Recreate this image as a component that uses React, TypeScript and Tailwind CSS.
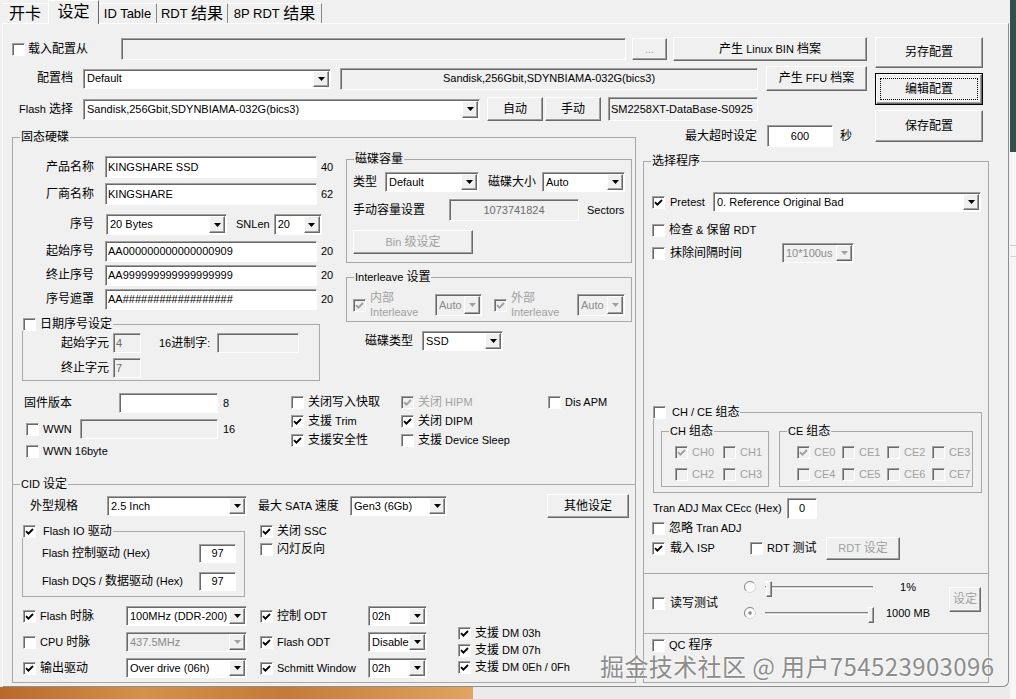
import type { ReactNode } from 'react';

const CJK = /([\u2E80-\u9FFF\u3000-\u303F\uFF00-\uFFEF]+)/;

// classic 3D frames
const sunken =
    'border border-t-[#a0a0a0] border-l-[#a0a0a0] border-b-white border-r-white shadow-[inset_1px_1px_0_#696969]';
const raised =
    'border border-t-white border-l-white border-b-[#696969] border-r-[#696969] shadow-[inset_-1px_-1px_0_#a0a0a0]';

// mixed text: CJK runs one size up from latin text
const L = ({ t, className = '' }: { t: string; className?: string }) => (
    <span className={`whitespace-nowrap ${className}`}>
        {t.split(CJK).map((p, i) => (i % 2 ? <span key={i} className="text-[12px]">{p}</span> : p))}
    </span>
);

const Check = ({ on = false, dis = false, className = '' }: { on?: boolean; dis?: boolean; className?: string }) => (
    <span className={`w-[13px] h-[13px] shrink-0 flex items-center justify-center ${sunken} ${dis ? 'bg-[#f0f0f0]' : 'bg-white'} ${className}`}>
        {on && (
            <svg width="9" height="9" viewBox="0 0 9 9">
                <path d="M1 4.2 3.4 6.6 8 2" fill="none" stroke={dis ? '#a0a0a0' : '#000'} strokeWidth="1.9" />
            </svg>
        )}
    </span>
);

const CB = ({ label, on = false, dis = false, className = '' }: { label: string; on?: boolean; dis?: boolean; className?: string }) => (
    <div className={`flex items-center ${className}`}>
        <Check on={on} dis={dis} />
        <L t={label} className={`ml-[4px] ${dis ? 'text-[#a0a0a0]' : ''}`} />
    </div>
);

const Field = ({ v = '', className = '', ro = false, dis = false, center = false }: { v?: string; className?: string; ro?: boolean; dis?: boolean; center?: boolean }) => (
    <div className={`${sunken} ${ro || dis ? 'bg-[#f0f0f0]' : 'bg-white'} ${dis ? 'text-[#6d6d6d]' : ''} flex items-center px-[2px] overflow-hidden whitespace-nowrap shrink-0 ${center ? 'justify-center' : ''} ${className}`}>
        {v}
    </div>
);

const Combo = ({ v, className = '', dis = false }: { v: string; className?: string; dis?: boolean }) => (
    <div className={`${sunken} ${dis ? 'bg-[#f0f0f0] text-[#8a8a8a]' : 'bg-white'} flex shrink-0 p-[1px] ${className}`}>
        <div className="flex-1 flex items-center pl-[2px] overflow-hidden whitespace-nowrap">{v}</div>
        <div className={`w-[16px] shrink-0 flex items-center justify-center bg-[#f0f0f0] ${raised}`}>
            <svg width="7" height="4" viewBox="0 0 7 4">
                <path d="M0 0h7L3.5 4z" fill={dis ? '#a0a0a0' : '#000'} />
            </svg>
        </div>
    </div>
);

const Btn = ({ t, className = '', dis = false }: { t: string; className?: string; dis?: boolean }) => (
    <div className={`${raised} bg-[#f0f0f0] flex items-center justify-center shrink-0 ${dis ? 'text-[#a0a0a0]' : ''} ${className}`}>
        <L t={t} />
    </div>
);

const DefBtn = ({ t, className = '' }: { t: string; className?: string }) => (
    <div className={`border border-black shrink-0 ${className}`}>
        <div className={`h-full ${raised} bg-[#f0f0f0] p-[3px]`}>
            <div className="h-full border border-dotted border-black flex items-center justify-center">
                <L t={t} />
            </div>
        </div>
    </div>
);

const Group = ({ label, className = '', lbl = 'left-[7px]', children }: { label: ReactNode; className?: string; lbl?: string; children?: ReactNode }) => (
    <div className={`relative border border-[#a8a8a8] shrink-0 ${className}`}>
        <div className={`absolute -top-[8px] ${lbl} h-[14px] px-[1px] bg-[#f0f0f0] flex items-center`}>{label}</div>
        {children}
    </div>
);

const Radio = ({ on = false }: { on?: boolean }) => (
    <svg width="12" height="12" viewBox="0 0 12 12" className="shrink-0">
        <circle cx="6" cy="6" r="5.5" fill="#fbfbfb" stroke="#d8d8d8" />
        <path d="M9.9 2.1A5.5 5.5 0 0 0 2.1 9.9" fill="none" stroke="#8a8a8a" />
        {on && <circle cx="6" cy="6" r="1.8" fill="#8a8a8a" />}
    </svg>
);

const Slider = ({ right = false }: { right?: boolean }) => (
    <div className="relative ml-[9px] w-[108px] h-[3px] shrink-0 border-t border-t-[#808080] border-b border-b-white bg-[#d4d4d4]">
        <div className={`absolute -top-[6px] ${right ? 'left-[103px]' : 'left-[1px]'} w-[6px] h-[16px] bg-[#f0f0f0] ${raised}`} />
    </div>
);

const SsdRow = ({ label, v, n, className = '' }: { label: string; v: string; n: string; className?: string }) => (
    <div className={`flex items-center ${className}`}>
        <div className="w-[72px] text-right"><L t={label} /></div>
        <Field v={v} className="ml-[11px] w-[212px] h-full" />
        <span className="ml-[4px]">{n}</span>
    </div>
);

export default function App() {
    return (
        <div className="relative w-[1016px] h-[699px] overflow-hidden bg-[#f0f0f0] text-black text-[11px] leading-[13px] font-['Liberation_Sans','Noto_Sans_CJK_SC',sans-serif]">
            <div className="flex h-full">
                <div className="w-[1010px] flex flex-col">
                    {/* Tabs */}
                    <div className="h-[23px] flex items-end pl-[2px]">
                        <div className="h-[20px] w-[46px] flex items-center justify-center border-t border-t-white text-[16px]">开卡</div>
                        <div className="relative z-10 -mb-[1px] h-[24px] w-[51px] flex items-center justify-center pb-[2px] bg-[#f0f0f0] border-t border-l border-r border-t-white border-l-white border-r-[#696969] text-[16px]">设定</div>
                        <div className="h-[20px] w-[58px] flex items-center justify-center border-t border-r border-t-white border-r-[#8a8a8a] text-[13px]">ID Table</div>
                        <div className="h-[20px] w-[71px] flex items-center justify-center border-t border-r border-t-white border-r-[#8a8a8a]">
                            <span className="text-[13px] whitespace-pre">RDT </span><span className="text-[16px]">结果</span>
                        </div>
                        <div className="h-[20px] w-[94px] flex items-center justify-center border-t border-r border-t-white border-r-[#8a8a8a]">
                            <span className="text-[13px] whitespace-pre">8P RDT </span><span className="text-[16px]">结果</span>
                        </div>
                    </div>

                    {/* Tab page */}
                    <div className="ml-[2px] w-[1007px] h-[664px] shrink-0 border border-t-white border-l-white border-r-[#8f8f8f] border-b-[#8f8f8f] rounded-br-[6px] pt-[13px] pl-[9px]">
                        {/* Top rows */}
                        <div className="flex items-start">
                            <div className="w-[855px] flex flex-col">
                                <div className="h-[24px] flex items-center">
                                    <Check />
                                    <L t="载入配置从" className="ml-[3px] w-[60px]" />
                                    <Field ro className="ml-[33px] w-[505px] h-[22px]" />
                                    <Btn t="..." className="ml-[6px] w-[35px] h-[22px] text-[#a0a0a0]" />
                                    <Btn t="产生 Linux BIN 档案" className="ml-[6px] w-[194px] h-[24px]" />
                                </div>
                                <div className="mt-[5px] h-[25px] flex items-center">
                                    <L t="配置档" className="w-[61px] text-right" />
                                    <Combo v="Default" className="ml-[10px] w-[248px] h-[20px]" />
                                    <Field ro center v="Sandisk,256Gbit,SDYNBIAMA-032G(bics3)" className="ml-[9px] w-[418px] h-[22px]" />
                                    <Btn t="产生 FFU 档案" className="ml-[8px] w-[101px] h-[25px]" />
                                </div>
                                <div className="mt-[6px] h-[24px] flex items-center">
                                    <L t="Flash 选择" className="w-[61px] text-right" />
                                    <Combo v="Sandisk,256Gbit,SDYNBIAMA-032G(bics3)" className="ml-[10px] w-[397px] h-[21px]" />
                                    <Btn t="自动" className="ml-[7px] w-[56px] h-[24px]" />
                                    <Btn t="手动" className="ml-[2px] w-[56px] h-[24px]" />
                                    <Field ro v="SM2258XT-DataBase-S0925" className="ml-[7px] w-[150px] h-[24px]" />
                                </div>
                            </div>
                            <div className="ml-[8px] w-[108px] -mb-[21px] flex flex-col">
                                <Btn t="另存配置" className="h-[31px]" />
                                <DefBtn t="编辑配置" className="mt-[5px] h-[32px]" />
                                <Btn t="保存配置" className="mt-[5px] h-[32px]" />
                            </div>
                        </div>

                        {/* Body */}
                        <div className="flex items-start">
                            {/* 固态硬碟 */}
                            <Group label={<L t="固态硬碟" />} className="mt-[16px] w-[624px] h-[546px] flex flex-col">
                                <div className="flex items-start">
                                    <div className="ml-[9px] w-[318px] shrink-0 flex flex-col">
                                        <SsdRow label="产品名称" v="KINGSHARE SSD" n="40" className="mt-[18px] h-[22px]" />
                                        <SsdRow label="厂商名称" v="KINGSHARE" n="62" className="mt-[5px] h-[22px]" />
                                        <div className="mt-[9px] h-[21px] flex items-center">
                                            <div className="w-[72px] text-right"><L t="序号" /></div>
                                            <Combo v="20 Bytes" className="ml-[12px] w-[121px] h-[21px]" />
                                            <span className="ml-[9px]">SNLen</span>
                                            <Combo v="20" className="ml-[4px] w-[48px] h-[21px]" />
                                        </div>
                                        <SsdRow label="起始序号" v="AA000000000000000909" n="20" className="mt-[6px] h-[21px]" />
                                        <SsdRow label="终止序号" v="AA999999999999999999" n="20" className="mt-[3px] h-[21px]" />
                                        <SsdRow label="序号遮罩" v="AA##################" n="20" className="mt-[3px] h-[21px]" />
                                        <Group
                                            className="mt-[14px] w-[298px] h-[57px]"
                                            lbl="-left-[1px]"
                                            label={<><Check /><L t="日期序号设定" className="ml-[4px]" /></>}
                                        >
                                            <div className="mt-[8px] h-[20px] flex items-center">
                                                <div className="w-[86px] text-right"><L t="起始字元" /></div>
                                                <Field v="4" dis className="ml-[4px] w-[28px] h-[20px]" />
                                                <L t="16进制字:" className="ml-[18px] w-[56px]" />
                                                <Field dis className="ml-[2px] w-[82px] h-[20px]" />
                                            </div>
                                            <div className="mt-[5px] h-[20px] flex items-center">
                                                <div className="w-[86px] text-right"><L t="终止字元" /></div>
                                                <Field v="7" dis className="ml-[4px] w-[28px] h-[20px]" />
                                            </div>
                                        </Group>
                                    </div>

                                    <div className="ml-[6px] w-[286px] shrink-0 flex flex-col">
                                        <Group label={<L t="磁碟容量" />} className="mt-[21px] w-[286px] h-[104px] flex flex-col">
                                            <div className="mt-[12px] h-[20px] flex items-center pl-[6px]">
                                                <L t="类型" className="w-[24px]" />
                                                <Combo v="Default" className="ml-[8px] w-[94px] h-[20px]" />
                                                <L t="磁碟大小" className="ml-[9px] w-[48px]" />
                                                <Combo v="Auto" className="ml-[6px] w-[83px] h-[20px]" />
                                            </div>
                                            <div className="mt-[7px] h-[22px] flex items-center pl-[6px]">
                                                <L t="手动容量设置" className="w-[72px]" />
                                                <Field v="1073741824" dis center className="ml-[24px] w-[130px] h-[22px]" />
                                                <span className="ml-[8px]">Sectors</span>
                                            </div>
                                            <div className="mt-[9px] h-[24px] flex items-center pl-[6px]">
                                                <Btn t="Bin 级设定" dis className="w-[120px] h-[24px]" />
                                            </div>
                                        </Group>
                                        <Group label={<L t="Interleave 设置" />} className="mt-[14px] w-[286px] h-[45px]">
                                            <div className="mt-[16px] h-[22px] flex items-center pl-[6px]">
                                                <Check on dis />
                                                <div className="ml-[4px] w-[65px] flex flex-col leading-[14px] text-[#a0a0a0]">
                                                    <L t="内部" />
                                                    <span>Interleave</span>
                                                </div>
                                                <Combo v="Auto" dis className="w-[47px] h-[22px]" />
                                                <Check on dis className="ml-[12px]" />
                                                <div className="ml-[4px] w-[66px] flex flex-col leading-[14px] text-[#a0a0a0]">
                                                    <L t="外部" />
                                                    <span>Interleave</span>
                                                </div>
                                                <Combo v="Auto" dis className="w-[48px] h-[22px]" />
                                            </div>
                                        </Group>
                                        <div className="mt-[9px] h-[20px] flex items-center pl-[19px]">
                                            <L t="磁碟类型" className="w-[48px]" />
                                            <Combo v="SSD" className="ml-[9px] w-[81px] h-[20px]" />
                                        </div>
                                    </div>
                                </div>

                                {/* firmware + feature checkboxes */}
                                <div className="mt-[12px] flex items-start">
                                    <div className="ml-[11px] w-[216px] shrink-0 flex flex-col">
                                        <div className="h-[20px] flex items-center">
                                            <L t="固件版本" className="w-[95px]" />
                                            <Field className="w-[99px] h-[20px]" />
                                            <span className="ml-[5px]">8</span>
                                        </div>
                                        <div className="mt-[6px] h-[20px] flex items-center">
                                            <Check className="ml-[2px]" />
                                            <span className="ml-[4px] w-[37px]">WWN</span>
                                            <Field dis className="w-[138px] h-[20px]" />
                                            <span className="ml-[5px]">16</span>
                                        </div>
                                        <div className="mt-[5px] h-[15px] flex items-center">
                                            <Check className="ml-[2px]" />
                                            <span className="ml-[4px]">WWN 16byte</span>
                                        </div>
                                    </div>
                                    <div className="ml-[51px] w-[110px] shrink-0 flex flex-col">
                                        <CB label="关闭写入快取" className="h-[19px]" />
                                        <CB label="支援 Trim" on className="h-[19px]" />
                                        <CB label="支援安全性" on className="h-[19px]" />
                                    </div>
                                    <div className="w-[147px] shrink-0 flex flex-col">
                                        <CB label="关闭 HIPM" on dis className="h-[19px]" />
                                        <CB label="关闭 DIPM" on className="h-[19px]" />
                                        <CB label="支援 Device Sleep" className="h-[19px]" />
                                    </div>
                                    <CB label="Dis APM" className="h-[19px]" />
                                </div>

                                {/* CID 设定 */}
                                <div className="relative mt-[25px] border-t border-t-[#a8a8a8] flex flex-col">
                                    <div className="absolute -top-[8px] left-[7px] h-[14px] px-[1px] bg-[#f0f0f0] flex items-center">
                                        <L t="CID 设定" />
                                    </div>
                                    <div className="mt-[9px] h-[24px] flex items-center">
                                        <L t="外型规格" className="ml-[17px] w-[77px]" />
                                        <Combo v="2.5 Inch" className="w-[140px] h-[20px]" />
                                        <L t="最大 SATA 速度" className="ml-[11px] w-[92px]" />
                                        <Combo v="Gen3 (6Gb)" className="w-[97px] h-[20px]" />
                                        <Btn t="其他设定" className="ml-[100px] w-[82px] h-[24px]" />
                                    </div>
                                    <div className="mt-[6px] flex items-start">
                                        <Group
                                            className="ml-[9px] mt-[7px] w-[223px] h-[66px]"
                                            lbl="-left-[1px]"
                                            label={<><Check on /><L t="Flash IO 驱动" className="ml-[7px]" /></>}
                                        >
                                            <div className="mt-[12px] h-[19px] flex items-center pl-[19px]">
                                                <L t="Flash 控制驱动 (Hex)" className="w-[157px]" />
                                                <Field v="97" center className="w-[37px] h-[19px]" />
                                            </div>
                                            <div className="mt-[9px] h-[19px] flex items-center pl-[19px]">
                                                <L t="Flash DQS / 数据驱动 (Hex)" className="w-[157px]" />
                                                <Field v="97" center className="w-[37px] h-[19px]" />
                                            </div>
                                        </Group>
                                        <div className="ml-[15px] flex flex-col">
                                            <CB label="关闭 SSC" on className="h-[14px]" />
                                            <CB label="闪灯反向" className="mt-[4px] h-[14px]" />
                                        </div>
                                    </div>
                                    <div className="mt-[9px] flex items-start">
                                        <div className="ml-[10px] flex flex-col">
                                            <div className="h-[20px] flex items-center">
                                                <Check on />
                                                <L t="Flash 时脉" className="ml-[4px] w-[86px]" />
                                                <Combo v="100MHz (DDR-200)" className="w-[121px] h-[20px]" />
                                            </div>
                                            <div className="mt-[6px] h-[20px] flex items-center">
                                                <Check />
                                                <L t="CPU 时脉" className="ml-[4px] w-[86px]" />
                                                <Combo v="437.5MHz" dis className="w-[121px] h-[20px]" />
                                            </div>
                                            <div className="mt-[6px] h-[20px] flex items-center">
                                                <Check on />
                                                <L t="输出驱动" className="ml-[4px] w-[86px]" />
                                                <Combo v="Over drive (06h)" className="w-[121px] h-[20px]" />
                                            </div>
                                        </div>
                                        <div className="ml-[13px] flex flex-col">
                                            <div className="h-[20px] flex items-center">
                                                <Check on />
                                                <L t="控制 ODT" className="ml-[4px] w-[91px]" />
                                                <Combo v="02h" className="w-[59px] h-[20px]" />
                                            </div>
                                            <div className="mt-[6px] h-[20px] flex items-center">
                                                <Check on />
                                                <L t="Flash ODT" className="ml-[4px] w-[91px]" />
                                                <Combo v="Disable" className="w-[59px] h-[20px]" />
                                            </div>
                                            <div className="mt-[6px] h-[20px] flex items-center">
                                                <Check on />
                                                <L t="Schmitt Window" className="ml-[4px] w-[91px]" />
                                                <Combo v="02h" className="w-[59px] h-[20px]" />
                                            </div>
                                        </div>
                                        <div className="ml-[31px] mt-[19px] flex flex-col">
                                            <CB label="支援 DM 03h" on className="h-[17px]" />
                                            <CB label="支援 DM 07h" on className="h-[17px]" />
                                            <CB label="支援 DM 0Eh / 0Fh" on className="h-[17px]" />
                                        </div>
                                    </div>
                                </div>
                            </Group>

                            {/* right column */}
                            <div className="ml-[7px] w-[346px] shrink-0 flex flex-col">
                                <div className="mt-[4px] h-[22px] flex items-center">
                                    <L t="最大超时设定" className="ml-[42px] w-[72px]" />
                                    <Field v="600" center className="ml-[10px] w-[66px] h-[22px]" />
                                    <L t="秒" className="ml-[7px]" />
                                </div>
                                <Group label={<L t="选择程序" />} className="mt-[14px] w-[346px] h-[522px] flex flex-col">
                                    <div className="mt-[30px] h-[20px] flex items-center">
                                        <Check on className="ml-[8px]" />
                                        <span className="ml-[5px] w-[43px]">Pretest</span>
                                        <Combo v="0. Reference Original Bad" className="w-[268px] h-[20px]" />
                                    </div>
                                    <CB label="检查 & 保留 RDT" className="mt-[11px] ml-[8px] h-[14px]" />
                                    <div className="mt-[6px] h-[20px] flex items-center">
                                        <Check className="ml-[8px]" />
                                        <L t="抹除间隔时间" className="ml-[5px] w-[112px]" />
                                        <Combo v="10*100us" dis className="w-[72px] h-[20px]" />
                                    </div>
                                    <Group
                                        className="mt-[149px] ml-[9px] w-[329px] h-[81px]"
                                        lbl="-left-[2px]"
                                        label={<><Check /><L t="CH / CE 组态" className="ml-[6px]" /></>}
                                    >
                                        <div className="mt-[18px] flex items-start">
                                            <Group label={<L t="CH 组态" />} className="ml-[7px] w-[108px] h-[56px]">
                                                <div className="mt-[9px] pl-[13px] flex flex-col">
                                                    <div className="h-[22px] flex items-center">
                                                        <CB label="CH0" on dis className="w-[48px]" />
                                                        <CB label="CH1" dis />
                                                    </div>
                                                    <div className="h-[22px] flex items-center">
                                                        <CB label="CH2" dis className="w-[48px]" />
                                                        <CB label="CH3" dis />
                                                    </div>
                                                </div>
                                            </Group>
                                            <Group label={<L t="CE 组态" />} className="ml-[10px] w-[194px] h-[56px]">
                                                <div className="mt-[9px] pl-[17px] flex flex-col">
                                                    <div className="h-[22px] flex items-center">
                                                        <CB label="CE0" on dis className="w-[45px]" />
                                                        <CB label="CE1" dis className="w-[45px]" />
                                                        <CB label="CE2" dis className="w-[45px]" />
                                                        <CB label="CE3" dis />
                                                    </div>
                                                    <div className="h-[22px] flex items-center">
                                                        <CB label="CE4" dis className="w-[45px]" />
                                                        <CB label="CE5" dis className="w-[45px]" />
                                                        <CB label="CE6" dis className="w-[45px]" />
                                                        <CB label="CE7" dis />
                                                    </div>
                                                </div>
                                            </Group>
                                        </div>
                                    </Group>
                                    <div className="mt-[5px] h-[21px] flex items-center">
                                        <span className="ml-[9px] w-[134px]">Tran ADJ Max CEcc (Hex)</span>
                                        <Field v="0" center className="w-[30px] h-[21px]" />
                                    </div>
                                    <CB label="忽略 Tran ADJ" className="mt-[2px] ml-[8px] h-[14px]" />
                                    <div className="mt-[2px] h-[23px] flex items-center">
                                        <Check on className="ml-[8px]" />
                                        <L t="载入 ISP" className="ml-[5px] w-[80px]" />
                                        <Check />
                                        <L t="RDT 测试" className="ml-[4px] w-[59px]" />
                                        <Btn t="RDT 设定" dis className="w-[74px] h-[23px]" />
                                    </div>
                                    <div className="mt-[13px] h-[60px] border-t border-t-[#a8a8a8] flex items-center">
                                        <Check className="ml-[8px]" />
                                        <L t="读写测试" className="ml-[5px] w-[74px]" />
                                        <div className="mb-[7px] flex flex-col">
                                            <div className="h-[26px] flex items-center">
                                                <Radio />
                                                <Slider />
                                                <span className="ml-[5px] w-[60px] text-center">1%</span>
                                            </div>
                                            <div className="h-[26px] flex items-center">
                                                <Radio on />
                                                <Slider right />
                                                <span className="ml-[5px] w-[60px] text-center">1000 MB</span>
                                            </div>
                                        </div>
                                        <Btn t="设定" dis className="ml-[11px] mb-[8px] w-[32px] h-[25px]" />
                                    </div>
                                    <div className="flex-1 border-t border-t-[#a8a8a8]">
                                        <CB label="QC 程序" className="mt-[4px] ml-[8px] h-[14px]" />
                                    </div>
                                </Group>
                            </div>
                        </div>
                    </div>

                    {/* desktop showing under the window */}
                    <div className="flex flex-1">
                        <div className="w-[473px] bg-[linear-gradient(90deg,#b8692a,#d4914a_30%,#c47a38_60%,#e0a560)]" />
                        <div className="flex-1 bg-[#ebebeb]" />
                    </div>
                </div>

                {/* neighbouring window edge */}
                <div className="w-[6px] flex flex-col">
                    <div className="h-[152px] bg-[#34504c]" />
                    <div className="h-[94px] bg-[#f6f6f6] border-b border-b-[#cfcfcf]" />
                    <div className="h-[11px] bg-[#f6f6f6] border-b border-b-[#d8d8d8]" />
                    <div className="flex-1 bg-[#f6f6f6]" />
                </div>
            </div>

            {/* watermark */}
            <div className="absolute left-[600px] top-[653px] text-[24px] leading-[26px] tracking-[0.4px] text-[#8c8c8c] whitespace-nowrap font-['Noto_Sans_CJK_SC',sans-serif] [text-shadow:0_0_2px_#fff,0_0_2px_#fff]">
                掘金技术社区 @ 用户754523903096
            </div>
        </div>
    );
}
